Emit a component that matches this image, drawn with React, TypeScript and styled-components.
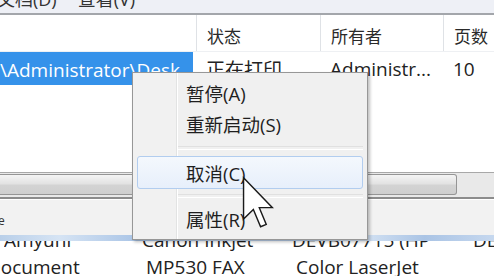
import React from "react";
import styled, { createGlobalStyle } from "styled-components";

const GlobalStyle = createGlobalStyle`
  html, body { margin: 0; padding: 0; background: #fff; overflow: hidden; }
  * { box-sizing: border-box; }
`;

const FONT = `"Open Sans", "Noto Sans CJK SC", sans-serif`;

const Screen = styled.div`
  position: relative;
  width: 494px;
  height: 276px;
  overflow: hidden;
  display: flex;
  flex-direction: column;
  font-family: ${FONT};
  color: #222;
  background: #fff;
`;

const MenuStrip = styled.div`
  height: 15px;
  flex: none;
  display: flex;
  align-items: flex-end;
  gap: 24px;
  overflow: hidden;
  background: #eef0f6;
  border-bottom: 2px solid #a3a6ab;
`;

const StripItem = styled.span`
  font-size: 18px;
  line-height: 22px;
  height: 22px;
  margin-bottom: 3px;
  margin-left: -3px;
  white-space: nowrap;
  color: #333;
`;

const Columns = `196px 124px 123px 1fr`;

const HeaderRow = styled.div`
  height: 37px;
  flex: none;
  display: grid;
  grid-template-columns: ${Columns};
  background: #fff;
  border-bottom: 1px solid #eef0f3;
`;

const HeaderCell = styled.div<{ $divider?: boolean }>`
  display: flex;
  align-items: center;
  padding-left: 10px;
  padding-top: 4px;
  font-size: 17px;
  color: #2a2a2a;
  border-left: ${(p) => (p.$divider ? "1px solid #dfe2e6" : "none")};
`;

const JobRow = styled.div`
  height: 33px;
  flex: none;
  display: grid;
  grid-template-columns: ${Columns};
`;

const JobCell = styled.div<{ $selected?: boolean }>`
  display: flex;
  align-items: center;
  padding-left: ${(p) => (p.$selected ? "0" : "10px")};
  margin-right: ${(p) => (p.$selected ? "3px" : "0")};
  border-right: ${(p) => (p.$selected ? "13px solid #3592ea" : "none")};
  font-size: 19px;
  white-space: nowrap;
  overflow: hidden;
  background: ${(p) => (p.$selected ? "#3592ea" : "transparent")};
  color: ${(p) => (p.$selected ? "#fff" : "#222")};
`;

const EmptyArea = styled.div`
  height: 87px;
  flex: none;
  background: #fff;
`;

const HScrollbar = styled.div`
  height: 27px;
  flex: none;
  display: flex;
  align-items: center;
  padding: 1px 37px 2px 0;
  background: #e9e9e9;
  border-top: 1px solid #a8a8a8;
  border-bottom: 2px solid #8c8c8c;
`;

const Thumb = styled.div`
  flex: 1;
  height: 21px;
  border: 1px solid #959595;
  border-left: none;
  border-radius: 0 3px 3px 0;
  background: linear-gradient(#f4f4f4, #e3e3e3 45%, #d3d3d3 55%, #cfcfcf);
`;

const StatusArea = styled.div`
  height: 36px;
  flex: none;
  display: flex;
  align-items: flex-end;
  padding: 0 0 8px 0;
  background: #f2f2f2;
  border-top: 1px solid #fff;
`;

const StatusText = styled.span`
  font-size: 12px;
  line-height: 12px;
  color: #333;
  margin-left: -2px;
`;

const BlueBand = styled.div`
  height: 6px;
  flex: none;
  background: linear-gradient(
    90deg,
    #b9cfe9 0%,
    #d6e4f4 12%,
    #a9c4e6 28%,
    #c3d6ee 45%,
    #b6cdea 62%,
    #d9e6f5 72%,
    #aac4e5 86%,
    #c6d8ef 100%
  );
`;

const LowerColumns = `146px 150px 174px 1fr`;

const PartialRow = styled.div`
  height: 13px;
  flex: none;
  display: grid;
  grid-template-columns: ${LowerColumns};
  align-items: end;
  overflow: hidden;
`;

const LowerRow = styled.div`
  height: 27px;
  flex: none;
  display: grid;
  grid-template-columns: ${LowerColumns};
  align-items: center;
`;

const LowerCell = styled.div<{ $shift?: number }>`
  font-size: 19px;
  line-height: 27px;
  white-space: nowrap;
  overflow: hidden;
  color: #222;
  margin-left: ${(p) => p.$shift ?? 0}px;
`;

const ContextMenu = styled.div`
  position: absolute;
  left: 132px;
  top: 72px;
  width: 236px;
  height: 168px;
  padding: 4px 4px 5px 4px;
  display: flex;
  flex-direction: column;
  border: 1px solid #979797;
  box-shadow: 2px 2px 3px rgba(0, 0, 0, 0.25);
  background: linear-gradient(
    90deg,
    #f1f1f1 0,
    #f1f1f1 43px,
    #e2e3e3 43px,
    #e2e3e3 44px,
    #ffffff 44px,
    #ffffff 45px,
    #f0f0f0 45px
  );
`;

const MenuItem = styled.div<{ $hover?: boolean }>`
  height: ${(p) => (p.$hover ? 33 : 31)}px;
  flex: none;
  display: flex;
  align-items: center;
  padding-left: 48px;
  font-size: 18.5px;
  color: #1e1e1e;
  border-radius: 3px;
  border: 1px solid ${(p) => (p.$hover ? "#b2cdef" : "transparent")};
  background: ${(p) =>
    p.$hover ? "linear-gradient(#f4f8fd, #e7effb)" : "transparent"};
`;

const MenuSeparator = styled.div<{ $h: number }>`
  height: ${(p) => p.$h}px;
  flex: none;
  display: flex;
  align-items: center;
  padding-left: 41px;
  &::after {
    content: "";
    flex: 1;
    height: 2px;
    border-top: 1px solid #e0e0e0;
    border-bottom: 1px solid #ffffff;
  }
`;

const Cursor = styled.svg`
  position: absolute;
  left: 242px;
  top: 176px;
  width: 32px;
  height: 53px;
  filter: blur(0.4px);
`;

export default function App() {
  return (
    <>
      <GlobalStyle />
      <Screen>
        <MenuStrip>
          <StripItem>文档(D)</StripItem>
          <StripItem>查看(V)</StripItem>
        </MenuStrip>
        <HeaderRow>
          <HeaderCell />
          <HeaderCell $divider>状态</HeaderCell>
          <HeaderCell $divider>所有者</HeaderCell>
          <HeaderCell $divider>页数</HeaderCell>
        </HeaderRow>
        <JobRow>
          <JobCell $selected>\Administrator\Desktop\打印文档.docx</JobCell>
          <JobCell>正在打印</JobCell>
          <JobCell>Administr...</JobCell>
          <JobCell>10</JobCell>
        </JobRow>
        <EmptyArea />
        <HScrollbar>
          <Thumb />
        </HScrollbar>
        <StatusArea>
          <StatusText>e</StatusText>
        </StatusArea>
        <BlueBand />
        <PartialRow>
          <LowerCell $shift={4}>Amyuni</LowerCell>
          <LowerCell $shift={-4}>Canon Inkjet</LowerCell>
          <LowerCell $shift={-4}>DEVB07715 (HP</LowerCell>
          <LowerCell $shift={3}>DEVB</LowerCell>
        </PartialRow>
        <LowerRow>
          <LowerCell $shift={-13}>Document</LowerCell>
          <LowerCell>MP530 FAX</LowerCell>
          <LowerCell>Color LaserJet</LowerCell>
          <LowerCell />
        </LowerRow>

        <ContextMenu>
          <MenuItem>暂停(A)</MenuItem>
          <MenuItem>重新启动(S)</MenuItem>
          <MenuSeparator $h={17} />
          <MenuItem $hover>取消(C)</MenuItem>
          <MenuSeparator $h={14} />
          <MenuItem>属性(R)</MenuItem>
        </ContextMenu>

        <Cursor viewBox="0 0 12.4 20.4">
          <path
            d="M0.6 0.6 L0.6 16.6 L4.4 12.9 L7.2 19.6 L9.4 18.7 L6.7 12.2 L11.8 12.2 Z"
            fill="#ffffff"
            stroke="#1a1a1a"
            strokeWidth="0.55"
            strokeLinejoin="miter"
          />
        </Cursor>
      </Screen>
    </>
  );
}
